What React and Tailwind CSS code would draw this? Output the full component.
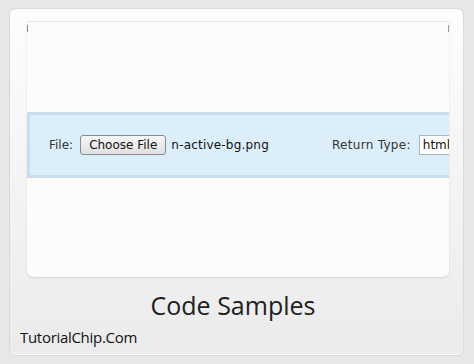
export default function App() {
  return (
    <div className="w-[474px] h-[364px] bg-[#e7e7e7] pl-[9px] pr-[10px] pt-[8px] pb-[8px]">
      <div className="h-full rounded-[7px] border border-[#dadada] bg-gradient-to-b from-[#fdfdfd] via-[#f4f4f4] to-[#ebebeb] shadow-[inset_0_-1px_0_#ffffff] pl-[17px] pr-[14px] pt-[12px] flex flex-col">
        <div className="relative h-[256px] bg-[#fcfcfc] rounded-b-[6px] border-t border-[#e4e4e4] shadow-[0_1px_2px_rgba(0,0,0,0.12)] flex flex-col">
          <div className="absolute left-0 top-[3px] w-px h-[7px] bg-[#8a8a8a]" />
          <div className="absolute right-0 top-[3px] w-px h-[7px] bg-[#9a9a9a]" />
          <div className="h-[90px]" />
          <div className="h-[66px] bg-[#ddeefb] border-t-[3px] border-l-[3px] border-b-[3px] border-[#c9ddec] flex items-center pl-[19px] overflow-hidden whitespace-nowrap font-['DejaVu_Sans',sans-serif] text-[12px] text-[#333]">
            <span>File:</span>
            <button className="ml-[7px] h-[20px] px-[8px] rounded-[3px] border border-[#7f8d99] bg-gradient-to-b from-[#f7f7f7] to-[#e0e0e0] text-[#111] text-[12px] leading-none">
              Choose File
            </button>
            <span className="ml-[5px] text-[#111] tracking-[0.2px]">n-active-bg.png</span>
            <span className="ml-[63px] tracking-[0.3px]">Return Type:</span>
            <span className="ml-[8px] h-[20px] pl-[3px] pr-[10px] border border-[#a8b4be] bg-white text-[#111] flex items-center">html</span>
          </div>
        </div>
        <div className="text-center pr-[10px] mt-[10px] font-['Open_Sans',sans-serif] text-[25px] leading-[36px] text-[#1e1e1e]">
          Code Samples
        </div>
        <div className="-ml-[7px] mt-[3px] font-['Open_Sans',sans-serif] text-[15px] tracking-[-0.3px] leading-[22px] text-[#111]">
          TutorialChip.Com
        </div>
      </div>
    </div>
  )
}
